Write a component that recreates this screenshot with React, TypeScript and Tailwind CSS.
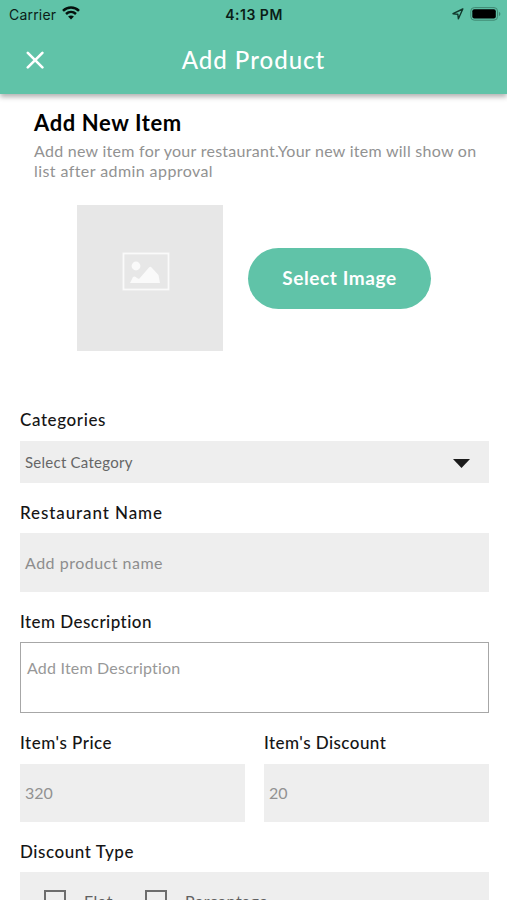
import type { ReactNode } from "react";

function Label({ children }: { children: ReactNode }) {
  return <div className="h-5 whitespace-nowrap text-[17px] leading-5 font-medium text-[#151515]">{children}</div>;
}

function StatusBar() {
  return (
    <div className="grid h-7 grid-cols-3 items-center pr-[6px] pl-[9px] font-['Inter',sans-serif] text-[14px] text-[#0b1d17]">
      <div className="flex items-center gap-[6px]">
        <span className="tracking-[0.2px]">Carrier</span>
        <svg className="-mt-[2px]" width="18" height="14" viewBox="0 0 18 14" fill="none" stroke="#05110d" strokeWidth="2.5">
          <path d="M1 4.9C5.5.4 12.5.4 17 4.9" />
          <path d="M4 8C6.9 5.3 11.1 5.3 14 8" />
          <path d="M9 13.4 6.1 10.5C7.8 9 10.2 9 11.9 10.5Z" fill="#05110d" stroke="none" />
        </svg>
      </div>
      <span className="-ml-[2px] text-center font-semibold tracking-[0.5px]">4:13 PM</span>
      <div className="flex items-center justify-end gap-[6px]">
        <svg width="12" height="12" viewBox="0 0 12 12" fill="none" stroke="#12382c" strokeWidth="1.4" strokeLinejoin="round">
          <path d="M10.8 1 1 5.7 5.8 6.2 6.4 10.8Z" />
        </svg>
        <svg className="-mt-[1px]" width="31" height="14" viewBox="0 0 31 14">
          <rect x=".8" y=".6" width="26.7" height="12.6" rx="3.5" fill="none" stroke="#3f8872" />
          <rect x="2.3" y="2.2" width="23.5" height="9.4" rx="2" fill="#000" />
          <path d="M28.9 4.8Q30.5 5.8 30.4 7Q30.4 8.2 28.9 9.2Z" fill="#3f8872" />
        </svg>
      </div>
    </div>
  );
}

export default function App() {
  return (
    <div className="h-[900px] w-[507px] overflow-hidden bg-white font-['Lato',sans-serif]">
      <header className="h-[94px] bg-[#60c3a8] shadow-[0_3px_5px_rgba(0,0,0,0.3)]">
        <StatusBar />
        <div className="grid h-[64px] grid-cols-[70px_1fr_70px] items-center">
          <svg className="ml-[26px]" width="18" height="18" viewBox="0 0 18 18" stroke="#fff" strokeWidth="2.6" strokeLinecap="round">
            <path d="M1.8 1.8 16.4 16.4M16.4 1.8 1.8 16.4" />
          </svg>
          <h1 className="text-center text-[24px] leading-8 font-medium tracking-[1px] text-white">Add Product</h1>
        </div>
      </header>

      <section className="h-[111px] pt-[14px] pl-[34px]">
        <h2 className="h-[30px] text-[22px] leading-[30px] font-bold tracking-[0.6px] text-black">Add New Item</h2>
        <p className="pt-[3px] text-[16px] leading-[19.5px] tracking-[0.27px] whitespace-nowrap text-[#929292]">
          Add new item for your restaurant.Your new item will show on
          <br />
          <span className="tracking-[0.42px]">list after admin approval</span>
        </p>
      </section>

      <section className="flex h-[146px] items-center gap-[25px] pl-[77px]">
        <div className="flex h-[146px] w-[146px] items-start justify-center bg-[#e7e7e7] pt-[47px] pr-[8px]">
          <svg width="48" height="39" viewBox="0 0 48 39">
            <rect x="1.5" y="1.5" width="45" height="36" fill="none" stroke="#fafafa" strokeWidth="1.8" />
            <circle cx="14" cy="14" r="4.4" fill="#fafafa" />
            <path d="M8 31 11 25Q13 23.5 15 26L17 27 27 15.5Q28.5 14 30 16L36.5 23 38 31Z" fill="#fafafa" />
          </svg>
        </div>
        <button className="h-[61px] w-[183px] rounded-full bg-[#60c3a8] text-[19px] font-bold tracking-[0.6px] text-white">
          Select Image
        </button>
      </section>

      <form className="pt-[59px] pr-[18px] pl-5">
        <Label><span className="tracking-[0.6px]">Categories</span></Label>
        <div className="mt-[11px] flex h-[42px] items-center justify-between bg-[#eeeeee] pr-[19px] pl-[5px]">
          <span className="text-[15px] tracking-[0.25px] text-[#666]">Select Category</span>
          <svg className="mt-[2px]" width="17" height="9" viewBox="0 0 17 9"><path d="M0 0H17L8.5 9Z" fill="#1b1b1b" /></svg>
        </div>

        <div className="mt-[20px]"><Label><span className="tracking-[0.9px]">Restaurant Name</span></Label></div>
        <div className="mt-[10px] flex h-[59px] items-center bg-[#eeeeee] pl-[5px] text-[16px] tracking-[0.5px] text-[#8d8d8d]">Add product name</div>

        <div className="mt-[20px]"><Label><span className="tracking-[0.45px]">Item Description</span></Label></div>
        <div className="mt-[10px] h-[71px] border-[1.5px] border-[#a7a7a7] pt-[15px] pl-[6px] text-[16px] leading-5 tracking-[0.2px] text-[#989898]">Add Item Description</div>

        <div className="mt-[20px] grid grid-cols-2 gap-[19px]">
          <div>
            <Label><span className="tracking-[0.5px]">Item's Price</span></Label>
            <div className="mt-[11px] flex h-[58px] items-center bg-[#eeeeee] pl-[5px] text-[16px] text-[#929292]">320</div>
          </div>
          <div>
            <Label><span className="tracking-[0.45px]">Item's Discount</span></Label>
            <div className="mt-[11px] flex h-[58px] items-center bg-[#eeeeee] pl-[5px] text-[16px] text-[#929292]">20</div>
          </div>
        </div>

        <div className="mt-[20px]"><Label><span className="tracking-[0.55px]">Discount Type</span></Label></div>
        <div className="mt-[10px] flex h-[60px] items-start bg-[#eeeeee] pt-[18px] pl-[24px] text-[16px] leading-[21px] text-[#606060]">
          <span className="size-[22px] border-2 border-[#6d6d6d]" />
          <span className="ml-[18px] w-[61px] tracking-[0.7px]">Flat</span>
          <span className="size-[22px] border-2 border-[#6d6d6d]" />
          <span className="ml-[18px] tracking-[0.5px]">Percentage</span>
        </div>
      </form>
    </div>
  );
}
